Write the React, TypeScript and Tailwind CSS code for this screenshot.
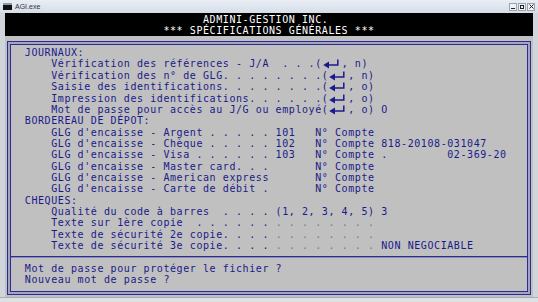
import React from "react";

const NAVY = "#1a1a8a";

function Enter() {
  return (
    <svg width="19.8" height="11" viewBox="0 0 19.8 11" className="inline-block align-top">
      <polygon points="1.2,7 7,3.4 7,10.6" fill={NAVY} />
      <path d="M6.5 7H15.8V1.6" stroke={NAVY} strokeWidth="1.5" fill="none" />
    </svg>
  );
}

function Row({ children }: { children?: React.ReactNode }) {
  return <div className="h-[11.36px] leading-[11.36px] whitespace-pre pl-[13.8px]">{children}</div>;
}

function Field() {
  return <span className="text-[#7a7a8c]">. . . . . . . .</span>;
}

export default function App() {
  return (
    <div className="w-[538px] h-[302px] bg-[#d4d9e0] flex flex-col overflow-hidden font-['DejaVu_Sans_Mono','Liberation_Mono',monospace]">
      {/* Title bar */}
      <div className="h-[13px] flex items-center bg-linear-to-b from-[#e9eef5] to-[#d5dde8]">
        <div className="ml-[3px] w-[9px] h-[7px] bg-[#111] border-t-2 border-[#8d9bb0]" />
        <span className="ml-[3px] text-[7px] leading-[7px] font-['Liberation_Sans',sans-serif] text-[#333]">AGI.exe</span>
        <div className="ml-auto mr-[3px] flex gap-px">
          <div className="w-[8px] h-[8px] bg-[#eef1f5] border border-[#9aa3ae] flex items-end justify-center pb-px">
            <div className="w-[4px] h-px bg-[#222]" />
          </div>
          <div className="w-[8px] h-[8px] bg-[#eef1f5] border border-[#9aa3ae] flex items-center justify-center">
            <div className="w-[4px] h-[4px] border border-[#222]" />
          </div>
          <div className="w-[8px] h-[8px] bg-[#eef1f5] border border-[#9aa3ae] flex items-center justify-center">
            <svg width="5" height="5" viewBox="0 0 5 5">
              <path d="M0.5 0.5L4.5 4.5M4.5 0.5L0.5 4.5" stroke="#222" strokeWidth="1" />
            </svg>
          </div>
        </div>
      </div>

      {/* Window body */}
      <div className="flex h-[284px]">
        <div className="w-[5px] bg-[#d0d5dc]" />
        <div className="w-[528px] flex flex-col text-[10px] tracking-[0.58px]">
          {/* Black header */}
          <div className="bg-black h-[22.72px] pt-[1.5px] text-white overflow-hidden">
            <div className="h-[11px] leading-[10px] pl-[198px] whitespace-pre">ADMINI-GESTION INC.</div>
            <div className="h-[10px] leading-[10px] pl-[158.4px] whitespace-pre">*** SPÉCIFICATIONS GÉNÉRALES ***</div>
          </div>
          {/* Gray console area */}
          <div className="bg-[#c0c0c0] h-[261.28px] pt-[5.28px] px-[2px] pb-[2px] text-[#1a1a8a]">
            <div className="h-[254px] border border-[#2c2c8c] p-[2px] bg-[#a3a3c6]">
              <div className="h-full border border-[#2c2c8c] bg-[#c0c0c0] pt-[2.08px]">
                <Row>JOURNAUX:</Row>
                <Row>{"    Vérification des références - J/A  . . .("}<Enter />{", n)"}</Row>
                <Row>{"    Vérification des n° de GLG. . . . . . . .("}<Enter />{", n)"}</Row>
                <Row>{"    Saisie des identifications. . . . . . . .("}<Enter />{", o)"}</Row>
                <Row>{"    Impression des identifications. . . . . .("}<Enter />{", o)"}</Row>
                <Row>{"    Mot de passe pour accès au J/G ou employé("}<Enter />{", o) O"}</Row>
                <Row>BORDEREAU DE DÉPOT:</Row>
                <Row>{"    GLG d'encaisse - Argent . . . . . 101   N° Compte"}</Row>
                <Row>{"    GLG d'encaisse - Chèque . . . . . 102   N° Compte 818-20108-031047"}</Row>
                <Row>{"    GLG d'encaisse - Visa . . . . . . 103   N° Compte .         02-369-20"}</Row>
                <Row>{"    GLG d'encaisse - Master card. . .       N° Compte"}</Row>
                <Row>{"    GLG d'encaisse - American express       N° Compte"}</Row>
                <Row>{"    GLG d'encaisse - Carte de débit .       N° Compte"}</Row>
                <Row>CHEQUES:</Row>
                <Row>{"    Qualité du code à barres  . . . . (1, 2, 3, 4, 5) 3"}</Row>
                <Row>{"    Texte sur 1ère copie  . . . . . . "}<Field /></Row>
                <Row>{"    Texte de sécurité 2e copie. . . . "}<Field /></Row>
                <Row>{"    Texte de sécurité 3e copie. . . . "}<Field />{" NON NEGOCIABLE"}</Row>
                <div className="h-[11.36px] flex flex-col justify-center">
                  <div className="h-px bg-[#2c2c8c]" />
                  <div className="h-px bg-[#8a8abc]" />
                </div>
                <Row>Mot de passe pour protéger le fichier ?</Row>
                <Row>Nouveau mot de passe ?</Row>
              </div>
            </div>
          </div>
        </div>
        <div className="w-[5px] bg-[#d0d5dc]" />
      </div>
      <div className="h-[5px] bg-[#dde1e6] border-t border-[#a9adb3]" />
    </div>
  );
}
